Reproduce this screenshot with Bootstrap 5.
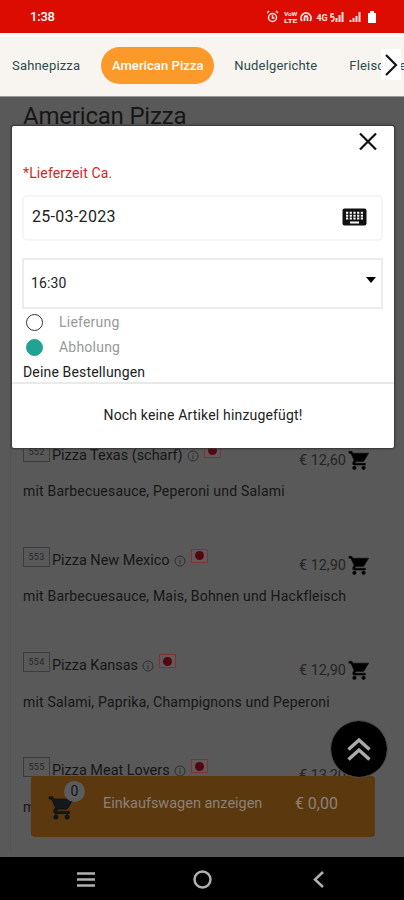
<!DOCTYPE html>
<html lang="de">
<head>
<meta charset="utf-8">
<meta name="viewport" content="width=device-width, initial-scale=1">
<title>American Pizza</title>
<link href="https://cdn.jsdelivr.net/npm/bootstrap@5.3.0/dist/css/bootstrap.min.css" rel="stylesheet">
<style>
body{font-family:Roboto,"Liberation Sans",sans-serif;background:#fff;color:#222}
.screen{width:404px;height:900px}
.status{height:33px;background:#dc0d00;font-size:13px;font-weight:500;padding:1px 27px 0 30px;letter-spacing:-.2px}
.cats{height:64px;background:#f8f5f1;border-top:4px solid #fffdfb;border-bottom:1px solid #999;font-size:13px;letter-spacing:.18px;color:#2b4a4c;padding:0 0 3px 12px}
.cats span{line-height:37px;flex-shrink:0}
.cat-on{background:#fc992b;color:#fff;border-radius:19px;width:113px;margin:0 20px 0 21px;letter-spacing:.08px}
.cat-next{right:3px;top:12px;width:20px;height:31px;background:#fff}
.menu{background:#595959;color:#161616;height:760px}
.menu-title{font-size:24px;line-height:28px;padding:5px 23px 0;letter-spacing:-.2px}
.dishes{padding:302.700px 0 0 10px}
.dish{height:105.200px;padding-left:12px;border-left:1px solid #545454}
.nr{width:27px;height:20px;border:1px solid #3c3c3c;font-size:9px;line-height:18px;color:#262626;margin-top:9px;letter-spacing:.3px}
.dish-name{font-size:14.5px;line-height:20px;margin:13px 0 0 2px;letter-spacing:-.03px}
.hot{width:17px;height:14px;border:1px solid #7c3436;background:#61595a;margin:11px 0 0 5px}
.hot i{width:9px;height:9px;background:#540610}
.info-i{margin:17px 0 0 4px}
.price{font-size:14.5px;line-height:20px;width:47px;color:#242424;margin:18px 0 0;letter-spacing:-.05px}
.dish-cart{margin:16px 34px 0 2px}
.desc{font-size:14px;line-height:18px;margin-top:10.500px;letter-spacing:.2px}
.basket{left:31px;top:776px;width:344px;height:61px;background:#5c380f;border-radius:4px;color:#8a8179;padding:0 37px 6px 17px}
.basket-n{left:33px;top:5px;width:21px;height:21px;background:#5c5c60;color:#111;font-size:14px}
.basket-label{font-size:14.5px;margin-left:28px;letter-spacing:-.02px}
.to-top{left:331px;top:721px;width:56px;height:56px;background:#000;outline:1px solid #4a4a4a}
.sysbar{height:43px;background:#000}
.dialog{left:12px;top:126px;width:382px;height:322px;background:#fff;border-radius:2px;padding:0 11px;box-shadow:0 0 2px 1px #333;color:#222;font-size:14px}
.dialog-top{height:59px}
.lead-time{color:#d41f27;line-height:20px;padding-top:37px;letter-spacing:.12px}
.date{height:46px;border:2px solid #f5f5f5;border-radius:5px;margin:10px 0 0 -1px;padding:0 14px 2px 8px;font-size:16px;letter-spacing:.3px}
.time{height:51px;border:2px solid #ececec;margin:17px 0 0 -1px;padding:0 5px 0 7px;letter-spacing:.1px}
.opt{height:25px;color:#999;letter-spacing:.22px;padding:1px 0 0 3px}
.dot{width:17px;height:17px;border:1.5px solid #333;margin-right:16px}
.dot-on{background:#22a293;border-color:#22a293}
.orders{line-height:20px;padding-top:3px;letter-spacing:.16px}
.none-yet{border-top:2px solid #e9e9e9;margin:0 -11px;padding-top:21px;line-height:20px;letter-spacing:.17px}
</style>
<script src="https://cdn.jsdelivr.net/npm/bootstrap@5.3.0/dist/js/bootstrap.bundle.min.js"></script>
</head>
<body>
<svg class="d-none"><defs>
<symbol id="cart" viewBox="0 0 24 24"><path stroke="#0c0d0e" stroke-width=".6" d="M7 18a2 2 0 1 0 0 4 2 2 0 0 0 0-4zM1 2v2h2l3.600 7.600-1.350 2.450C4.520 15.370 5.480 17 7 17h12v-2H7.420l1.130-2h7.450c.750 0 1.410-.410 1.750-1.030L22.500 4H5.210l-.94-2zM17 18a2 2 0 1 0 0 4 2 2 0 0 0 0-4z"/></symbol>
<symbol id="info" viewBox="0 0 12 12"><circle cx="6" cy="6" r="5" fill="none" stroke="#2e2e2e"/><path d="M6 5.200V9M6 3v1" stroke="#2e2e2e"/></symbol>
</defs></svg>
<div class="screen position-relative overflow-hidden d-flex flex-column">
<header class="status d-flex align-items-center justify-content-between text-white">
<span>1:38</span>
<svg width="110" height="16" viewBox="0 0 110 16" fill="none" stroke="#ffe3de" stroke-width="1.500">
<circle cx="5.500" cy="8.500" r="4"/><path d="M5.500 6v3h2M0 4l2-2M11 4L9 2"/>
<g fill="#ffe3de" stroke="none" font-size="6" font-weight="700"><text x="17" y="7" textLength="13" lengthAdjust="spacingAndGlyphs">VoW</text><text x="17" y="14" textLength="13" lengthAdjust="spacingAndGlyphs">LTE</text></g>
<path d="M35 12a5 5 0 1 1 8 0M37.500 12V8.500a1.500 1.500 0 0 1 3 0V12" stroke-width="1.800"/>
<text x="49.500" y="12" font-size="9" font-weight="700" fill="#ffe3de" stroke="none" textLength="11">4G</text>
<path d="M67 5h-3v3c3-1 4 1 2 4h-2"/><path d="M69.500 13V9M72.500 13V6M75.500 13V3" stroke-width="2"/>
<path d="M83.500 13v-2M86.500 13v-4M89.500 13V7M92.500 13V3" stroke-width="2"/>
<path d="M101 4h2V2h4v2h2v10h-8z" fill="#fff" stroke="none"/>
</svg>
</header>
<nav class="cats position-relative d-flex align-items-center text-nowrap overflow-hidden">
<span>Sahnepizza</span><span class="cat-on text-center fw-medium">American Pizza</span><span>Nudelgerichte</span><span class="ms-4 ps-2">Fleischger</span>
<div class="cat-next position-absolute"><svg width="20" height="31" fill="none" stroke="#151515" stroke-width="2.200"><path d="M5 6l10 10-10 10"/></svg></div>
</nav>
<main class="menu">
<h1 class="menu-title m-0 fw-normal">American Pizza</h1>
<div class="dishes">
<article class="dish"><div class="d-flex align-items-start"><span class="nr text-center">552</span><span class="dish-name">Pizza Texas (scharf)</span><svg class="info-i" width="12" height="12"><use href="#info"/></svg><span class="hot d-flex align-items-center justify-content-center"><i class="rounded-circle"></i></span><span class="price ms-auto">€ 12,60</span><svg class="dish-cart" width="22" height="23"><use href="#cart"/></svg></div><div class="desc">mit Barbecuesauce, Peperoni und Salami</div></article>
<article class="dish"><div class="d-flex align-items-start"><span class="nr text-center">553</span><span class="dish-name">Pizza New Mexico</span><svg class="info-i" width="12" height="12"><use href="#info"/></svg><span class="hot d-flex align-items-center justify-content-center"><i class="rounded-circle"></i></span><span class="price ms-auto">€ 12,90</span><svg class="dish-cart" width="22" height="23"><use href="#cart"/></svg></div><div class="desc">mit Barbecuesauce, Mais, Bohnen und Hackfleisch</div></article>
<article class="dish"><div class="d-flex align-items-start"><span class="nr text-center">554</span><span class="dish-name">Pizza Kansas</span><svg class="info-i" width="12" height="12"><use href="#info"/></svg><span class="hot d-flex align-items-center justify-content-center"><i class="rounded-circle"></i></span><span class="price ms-auto">€ 12,90</span><svg class="dish-cart" width="22" height="23"><use href="#cart"/></svg></div><div class="desc">mit Salami, Paprika, Champignons und Peperoni</div></article>
<article class="dish"><div class="d-flex align-items-start"><span class="nr text-center">555</span><span class="dish-name">Pizza Meat Lovers</span><svg class="info-i" width="12" height="12"><use href="#info"/></svg><span class="hot d-flex align-items-center justify-content-center"><i class="rounded-circle"></i></span><span class="price ms-auto">€ 13,20</span><svg class="dish-cart" width="22" height="23"><use href="#cart"/></svg></div><div class="desc">m</div></article>
</div>
</main>
<div class="basket position-absolute d-flex align-items-center">
<svg width="27" height="28" class="mt-2" fill="#15181a"><use href="#cart"/></svg>
<span class="basket-n position-absolute rounded-circle d-flex align-items-center justify-content-center">0</span>
<span class="basket-label">Einkaufswagen anzeigen</span><span class="basket-sum ms-auto">€ 0,00</span>
</div>
<div class="to-top position-absolute rounded-circle d-flex align-items-center justify-content-center"><svg width="26" height="26" fill="none" stroke="#aaa" stroke-width="3.500"><path d="M2.500 13.500L13 4l10.500 9.500M2.500 23.500L13 14l10.500 9.500"/></svg></div>
<section class="dialog position-absolute" role="dialog">
<svg class="position-absolute top-0 end-0" width="40" height="32" fill="none" stroke="#111" stroke-width="2.200"><path d="M6 7.500l16 16M22 7.500l-16 16"/></svg>
<div class="dialog-top"><div class="lead-time">*Lieferzeit Ca.</div></div>
<div class="date d-flex align-items-center justify-content-between"><span>25-03-2023</span>
<svg width="25" height="18"><rect x=".5" y=".5" width="24" height="17" rx="2" fill="#111"/><path d="M4 4.800h17M4 7.800h17M4 10.500h17" stroke="#fff" stroke-width="2" stroke-dasharray="2.200 1.500"/><path d="M8 14.500h9" stroke="#fff" stroke-width="2"/></svg></div>
<div class="time d-flex align-items-center justify-content-between"><span>16:30</span><svg class="mb-2" width="10" height="6"><path d="M0 0h10L5 6z" fill="#000"/></svg></div>
<div class="opt d-flex align-items-center"><span class="dot rounded-circle"></span>Lieferung</div>
<div class="opt d-flex align-items-center"><span class="dot dot-on rounded-circle"></span>Abholung</div>
<div class="orders">Deine Bestellungen</div>
<div class="none-yet text-center">Noch keine Artikel hinzugefügt!</div>
</section>
<footer class="sysbar"><svg width="404" height="43" fill="none" stroke="#b0b0b0" stroke-width="2.500"><path d="M77 16.500h18M77 22.500h18M77 28.500h18"/><circle cx="202.500" cy="22.500" r="8"/><path d="M323 15l-8 7.500 8 7.500"/></svg></footer>
</div>
</body>
</html>
